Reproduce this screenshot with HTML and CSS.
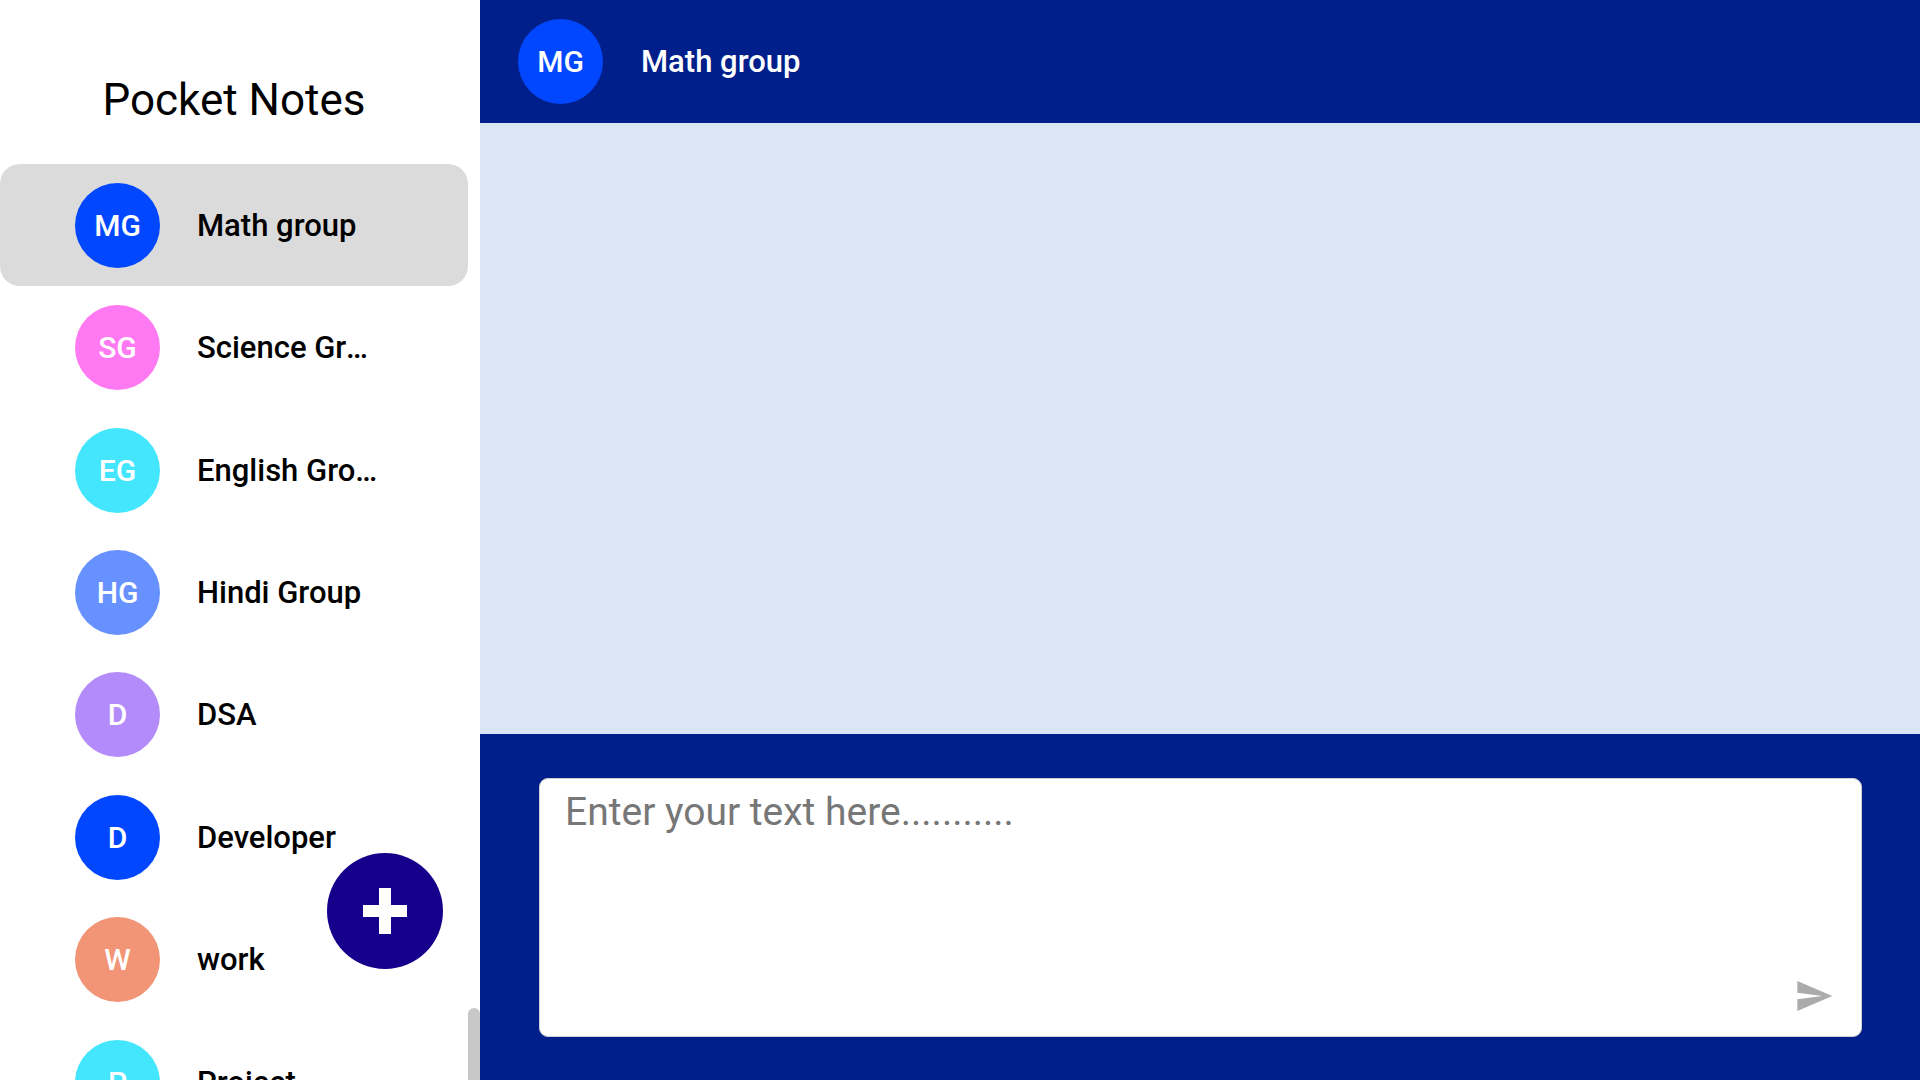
FILE: index.html
```html
<!DOCTYPE html>
<html lang="en">
<head>
<meta charset="utf-8">
<title>Pocket Notes</title>
<link rel="stylesheet" href="styles.css">
</head>
<body>
<div class="app">
  <aside class="sidebar">
    <div class="sidebar-content">
      <h1 class="brand">Pocket Notes</h1>
      <ul class="groups">
        <li class="group active"><span class="avatar c-blue">MG</span><span class="name">Math group</span></li>
        <li class="group"><span class="avatar c-pink">SG</span><span class="name">Science Group</span></li>
        <li class="group"><span class="avatar c-cyan">EG</span><span class="name">English Group</span></li>
        <li class="group"><span class="avatar c-sky">HG</span><span class="name">Hindi Group</span></li>
        <li class="group"><span class="avatar c-purple">D</span><span class="name">DSA</span></li>
        <li class="group"><span class="avatar c-blue">D</span><span class="name">Developer</span></li>
        <li class="group"><span class="avatar c-orange">W</span><span class="name">work</span></li>
        <li class="group"><span class="avatar c-cyan">P</span><span class="name">Project</span></li>
      </ul>
      <button class="fab" aria-label="Create group">
        <svg width="46" height="46" viewBox="0 0 46 46"><rect x="17" y="0" width="12" height="46" fill="#fff"/><rect x="1" y="17" width="44" height="12" fill="#fff"/></svg>
      </button>
    </div>
    <div class="scrollbar"><div class="thumb"></div></div>
  </aside>
  <main class="chat">
    <header class="chat-header">
      <span class="avatar c-blue">MG</span>
      <span class="chat-title">Math group</span>
    </header>
    <section class="notes"></section>
    <footer class="composer">
      <div class="input-box">
        <textarea class="input" placeholder="Enter your text here..........."></textarea>
        <svg class="send" width="40" height="40" viewBox="0 0 24 24"><path d="M2.01 21L23 12 2.01 3 2 10l15 2-15 2z" fill="#ababab"/></svg>
      </div>
    </footer>
  </main>
</div>
</body>
</html>
```
FILE: styles.css
```css
* { box-sizing: border-box; }
html, body { margin: 0; padding: 0; height: 100%; overflow: hidden; }
body { font-family: Roboto, "Liberation Sans", sans-serif; color: #000; }

.app { display: flex; width: 1920px; height: 1080px; }

.sidebar { width: 480px; flex: none; display: flex; background: #fff; overflow: hidden; }
.sidebar-content { position: relative; width: 468px; padding-top: 74px; }
.brand { margin: 0 0 38px; font-size: 44px; font-weight: 400; line-height: 52px; text-align: center; }
.groups { list-style: none; margin: 0; padding: 0; }
.group { height: 122.45px; display: flex; align-items: center; padding-left: 75px; gap: 37px; border-radius: 20px; }
.group.active { background: #dbdbdb; }
.name { font-size: 31px; font-weight: 500; white-space: nowrap; overflow: hidden; text-overflow: ellipsis; max-width: 184px; }

.avatar { width: 85px; height: 85px; border-radius: 50%; flex: none; display: flex; align-items: center; justify-content: center; color: #fff; font-size: 30px; font-weight: 500; }
.c-blue { background: #0047ff; }
.c-pink { background: #ff79f2; }
.c-cyan { background: #43e6fc; }
.c-sky { background: #6691ff; }
.c-purple { background: #b38bfa; }
.c-orange { background: #f19576; }

.fab { position: absolute; left: 327px; top: 853px; width: 116px; height: 116px; border-radius: 50%; border: none; background: #16008b; display: flex; align-items: center; justify-content: center; padding: 0; }

.scrollbar { width: 12px; display: flex; flex-direction: column; justify-content: flex-end; }
.thumb { height: 72px; background: #c8c8c8; border-radius: 6px 6px 0 0; }

.chat { flex: 1; display: flex; flex-direction: column; }
.chat-header { height: 123px; flex: none; background: #001f8b; display: flex; align-items: center; padding-left: 38px; gap: 38px; }
.chat-title { color: #fff; font-size: 31px; font-weight: 500; }
.notes { flex: 1; background: #dae5f5; }
.composer { height: 346px; flex: none; background: #001f8b; padding: 44px 58px 43px 59px; }
.input-box { position: relative; height: 259px; background: #fff; border-radius: 9px; border: 1px solid #d0d0d0; }
.input { width: 100%; height: 100%; border: none; outline: none; resize: none; background: transparent; border-radius: 9px; padding: 10px 25px; font-family: Roboto, "Liberation Sans", sans-serif; font-size: 39px; color: #333; }
.input::placeholder { color: #777; }
.send { position: absolute; right: 27px; bottom: 20px; }
```
